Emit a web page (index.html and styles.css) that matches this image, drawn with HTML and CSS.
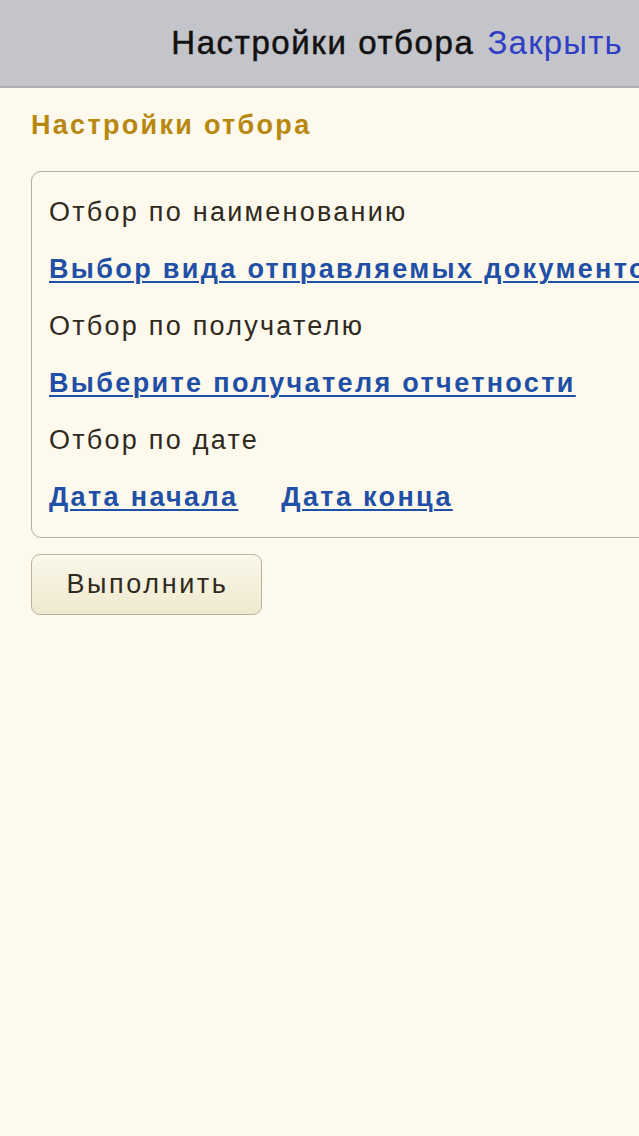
FILE: index.html
```html
<!DOCTYPE html>
<html lang="ru">
<head>
<meta charset="utf-8">
<title>Настройки отбора</title>
<link rel="stylesheet" href="styles.css">
</head>
<body>
<header class="topbar">
  <span class="topbar-title">Настройки отбора</span>
  <a class="topbar-close" href="#">Закрыть</a>
</header>
<main class="content">
  <h1 class="section-title">Настройки отбора</h1>
  <div class="group">
    <div class="row label">Отбор по наименованию</div>
    <div class="row"><a class="link" href="#">Выбор вида отправляемых документов</a></div>
    <div class="row label">Отбор по получателю</div>
    <div class="row"><a class="link" href="#">Выберите получателя отчетности</a></div>
    <div class="row label">Отбор по дате</div>
    <div class="row dates"><a class="link" href="#">Дата начала</a><a class="link" href="#">Дата конца</a></div>
  </div>
  <button class="btn" type="button">Выполнить</button>
</main>
</body>
</html>
```
FILE: styles.css
```css
html, body {
  margin: 0;
  padding: 0;
}
body {
  width: 639px;
  height: 1136px;
  overflow: hidden;
  background: #fdf9ec;
  font-family: "Liberation Sans", Arial, sans-serif;
  color: #2f2a1d;
}
.topbar {
  height: 86px;
  background: #c4c5ca;
  border-bottom: 2px solid #adaeb2;
  display: flex;
  align-items: center;
  justify-content: flex-end;
  padding: 0 16px 0 0;
  gap: 13px;
  box-sizing: content-box;
}
.topbar-title {
  font-size: 33px;
  letter-spacing: 1.6px;
  color: #111;
  -webkit-text-stroke: 0.5px #111;
}
.topbar-close {
  font-size: 33px;
  letter-spacing: 1.2px;
  color: #2f3ec4;
  text-decoration: none;
}
.content {
  padding: 0 0 0 31px;
}
.section-title {
  margin: 0;
  padding-top: 19px;
  height: 83px;
  box-sizing: border-box;
  font-size: 27px;
  font-weight: bold;
  letter-spacing: 2.3px;
  color: #b8870f;
  line-height: 36px;
}
.group {
  width: 660px;
  border: 1px solid #b3ae9f;
  border-radius: 10px;
  padding: 12px 0 10px 17px;
  box-sizing: border-box;
  height: 367px;
}
.row {
  height: 57px;
  line-height: 57px;
  font-size: 27px;
  letter-spacing: 2.25px;
  white-space: nowrap;
}
.label {
  color: #2f2a1d;
}
.link {
  font-weight: bold;
  letter-spacing: 2.35px;
  color: #1f4fa6;
  text-decoration: underline;
  text-underline-offset: 3px;
  text-decoration-thickness: 2px;
}
.dates {
  display: flex;
  gap: 43px;
}
.btn {
  margin-top: 16px;
  width: 231px;
  height: 61px;
  border: 1px solid #b9b39e;
  border-radius: 9px;
  background: linear-gradient(#fbf8ea, #efe9cf);
  font-family: "Liberation Sans", Arial, sans-serif;
  font-size: 27px;
  letter-spacing: 2.6px;
  color: #2f2a1d;
  padding: 0 0 0 2px;
  box-shadow: inset 0 1px 0 #fffdf4;
}
```
